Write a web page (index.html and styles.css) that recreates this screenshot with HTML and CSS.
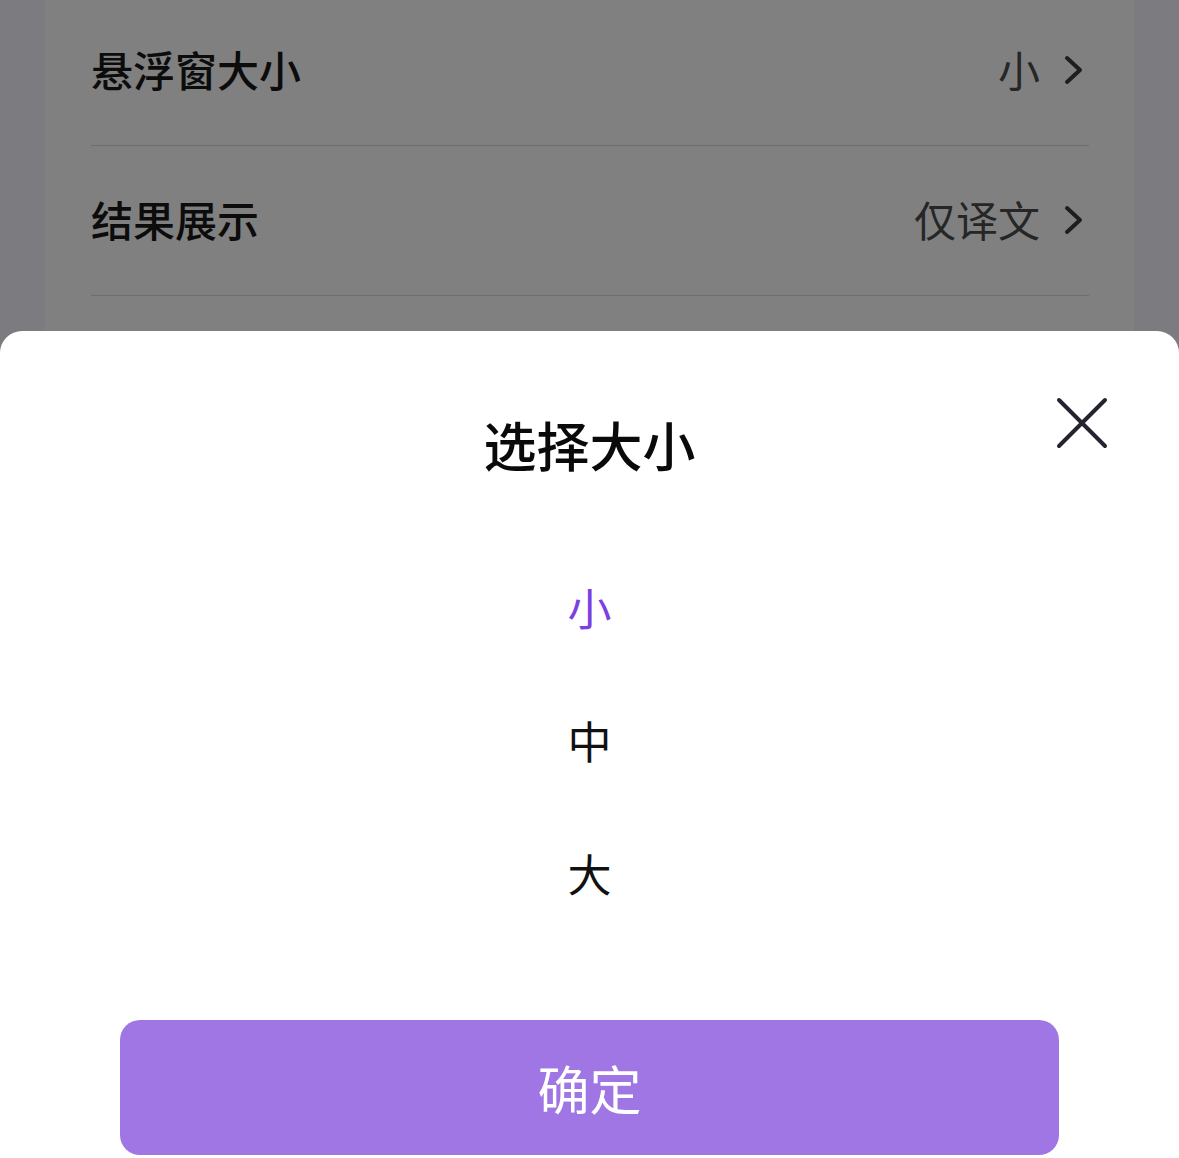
FILE: index.html
```html
<!DOCTYPE html>
<html lang="zh-CN">
<head>
<meta charset="utf-8">
<title>选择大小</title>
<link rel="stylesheet" href="styles.css">
</head>
<body>
<div class="screen">
  <div class="settings">
    <div class="row">
      <span class="label">悬浮窗大小</span>
      <span class="value">小
        <svg class="chev" width="22" height="32" viewBox="0 0 22 32"><path d="M4 4 L17 16 L4 28" fill="none" stroke="#1e1e1e" stroke-width="4" stroke-linecap="round" stroke-linejoin="round"/></svg>
      </span>
    </div>
    <div class="row">
      <span class="label">结果展示</span>
      <span class="value">仅译文
        <svg class="chev" width="22" height="32" viewBox="0 0 22 32"><path d="M4 4 L17 16 L4 28" fill="none" stroke="#1e1e1e" stroke-width="4" stroke-linecap="round" stroke-linejoin="round"/></svg>
      </span>
    </div>
  </div>

  <div class="sheet">
    <div class="sheet-title">选择大小</div>
    <button class="close" aria-label="关闭">
      <svg width="52" height="52" viewBox="0 0 52 52"><path d="M3 3 L49 49 M49 3 L3 49" fill="none" stroke="#25232f" stroke-width="4" stroke-linecap="round"/></svg>
    </button>
    <div class="options">
      <div class="option selected">小</div>
      <div class="option">中</div>
      <div class="option">大</div>
    </div>
    <button class="confirm">确定</button>
  </div>
</div>
</body>
</html>
```
FILE: styles.css
```css
* { box-sizing: border-box; }
html, body {
  margin: 0;
  padding: 0;
}
body {
  background: #7b7b80;
  font-family: "Noto Sans CJK SC", "Noto Sans", sans-serif;
}
.screen {
  position: relative;
  width: 1179px;
  height: 1158px;
  overflow: hidden;
  background: #7b7b80;
}
.settings {
  margin: -4px 45px 0 45px;
  padding: 0 45px 0 46px;
  background: #808080;
  height: 400px;
}
.row {
  height: 150px;
  display: flex;
  align-items: center;
  justify-content: space-between;
  border-bottom: 1px solid #6e6e6e;
  padding-bottom: 4px;
}
.label {
  font-size: 42px;
  font-weight: 500;
  color: #0c0c0c;
}
.value {
  display: flex;
  align-items: center;
  font-size: 42px;
  color: #262626;
  margin-right: 4px;
}
.chev {
  margin-left: 23px;
  margin-top: 3px;
}
.sheet {
  position: absolute;
  left: 0;
  right: 0;
  top: 331px;
  bottom: 0;
  background: #ffffff;
  border-radius: 22px 22px 0 0;
  display: flex;
  flex-direction: column;
  align-items: stretch;
  padding: 83px 120px 0 120px;
}
.sheet-title {
  text-align: center;
  font-size: 53px;
  font-weight: 500;
  line-height: 60px;
  color: #0a0a0a;
}
.close {
  position: absolute;
  top: 66px;
  right: 71px;
  width: 52px;
  height: 52px;
  padding: 0;
  border: 0;
  background: none;
  display: block;
}
.close svg { display: block; }
.options {
  margin-top: 66px;
  display: flex;
  flex-direction: column;
}
.option {
  height: 133px;
  display: flex;
  align-items: center;
  justify-content: center;
  font-size: 44px;
  color: #111111;
}
.option.selected {
  color: #7c3fe2;
}
.confirm {
  margin-top: 81px;
  height: 135px;
  border: 0;
  border-radius: 20px;
  background: #a076e4;
  color: #ffffff;
  font-family: "Noto Sans CJK SC", "Noto Sans", sans-serif;
  font-size: 52px;
  font-weight: 400;
  padding: 0;
}
```
